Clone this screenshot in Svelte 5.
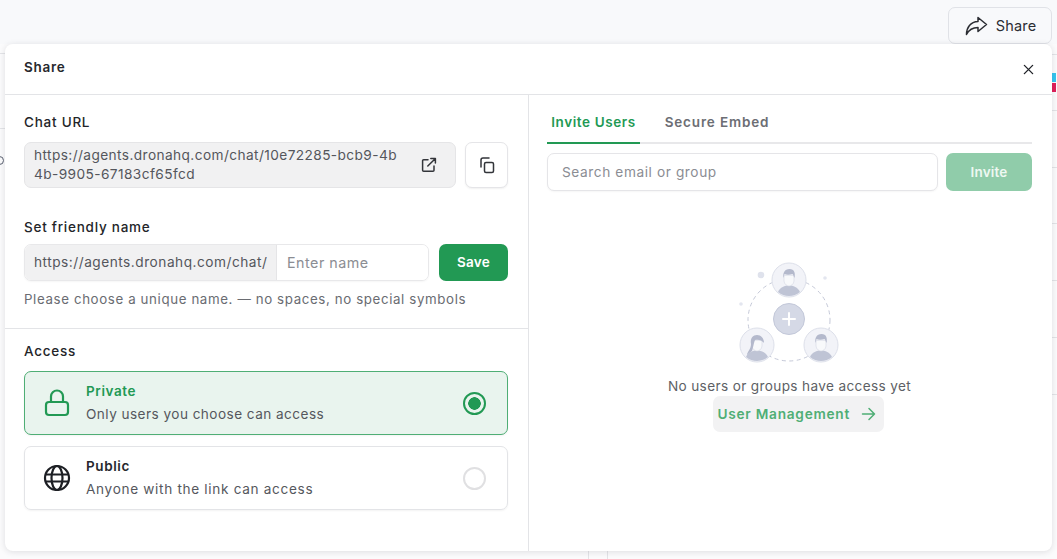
<script>
    const rowLines = [54, 110, 167, 223, 280, 337, 394];
    const peopleSpots = [
        { x: 50, y: 19 },
        { x: 18, y: 84 },
        { x: 82, y: 84 },
    ];

    let access = "private";
</script>

<div class="page">
    <header class="topbar">
        <button class="share-trigger">
            <svg width="24" height="24" viewBox="0 0 24 24" fill="none" stroke="#2b2d33" stroke-width="1.5" stroke-linejoin="round" stroke-linecap="round">
                <path d="M14 3.5 22.5 10.5 14 17.500V13.500C8.500 13.500 5 15.500 2.500 20.500 2.500 13.500 6.500 7.800 14 7.500Z" />
            </svg>
            Share
        </button>
    </header>

    <!-- table behind the dialog, only the edges show -->
    <div class="behind">
        <i class="line-left" style="top: 53px"></i>
        <i class="line-left" style="top: 128px"></i>
        <span class="peek"></span>
        {#each rowLines as top}
            <i class="line-right" style="top: {top}px"></i>
        {/each}
        <div class="slack"><b></b><b></b><b></b><b></b></div>
        <i class="line-v" style="left: 588px"></i>
        <i class="line-v" style="left: 607px"></i>
    </div>

    <div class="modal">
        <div class="modal-head">
            <h2>Share</h2>
            <button class="close" aria-label="Close">
                <svg width="11" height="11" viewBox="0 0 12 12" stroke="#22242a" stroke-width="1.500" stroke-linecap="round">
                    <path d="M1.500 1.500 10.500 10.500M10.500 1.500 1.500 10.500" />
                </svg>
            </button>
        </div>

        <div class="modal-body">
            <section class="left">
                <div class="link-part">
                    <div class="label label-url">Chat URL</div>
                    <div class="url-row">
                        <div class="url-box">
                            <span class="url-text">https://agents.dronahq.com/chat/10e72285-bcb9-4b4b-9905-67183cf65fcd</span>
                            <svg class="open" width="16" height="16" viewBox="0 0 16 16" fill="none" stroke="#33353a" stroke-width="1.500" stroke-linecap="round" stroke-linejoin="round">
                                <path d="M7 2.800H2.600a1 1 0 0 0-1 1V13.200a1 1 0 0 0 1 1H12a1 1 0 0 0 1-1V9" />
                                <path d="M6.800 9 14.200 1.700M9.800 1.500H14.400V6.100" />
                            </svg>
                        </div>
                        <button class="copy" aria-label="Copy">
                            <svg width="16" height="17" viewBox="0 0 16 17" fill="none" stroke="#33353a" stroke-width="1.500" stroke-linecap="round" stroke-linejoin="round">
                                <rect x="5.500" y="5.500" width="9" height="10" rx="1.500" />
                                <path d="M2 10V3a2 2 0 0 1 2-2h6" />
                            </svg>
                        </button>
                    </div>

                    <div class="label label-name">Set friendly name</div>
                    <div class="name-row">
                        <div class="name-field">
                            <span class="prefix">https://agents.dronahq.com/chat/</span>
                            <input placeholder="Enter name" />
                        </div>
                        <button class="save">Save</button>
                    </div>
                    <p class="hint">Please choose a unique name. — no spaces, no special symbols</p>
                </div>

                <div class="access-part">
                    <div class="label">Access</div>
                    <div class="options">
                        <div class="option" class:selected={access === "private"}>
                            <svg class="opt-icon" width="28" height="28" viewBox="0 0 28 28" fill="none" stroke="#229954" stroke-width="2.200" stroke-linejoin="round">
                                <rect x="3" y="13" width="22" height="13" rx="3" />
                                <path d="M8 13V7.500a6 6 0 0 1 12 0V13" />
                            </svg>
                            <div class="opt-text">
                                <strong>Private</strong>
                                <span class="tight">Only users you choose can access</span>
                            </div>
                            <span class="radio"></span>
                        </div>
                        <div class="option" class:selected={access === "public"}>
                            <svg class="opt-icon" width="28" height="28" viewBox="0 0 28 28" fill="none" stroke="#1d1f24" stroke-width="2.200">
                                <circle cx="14" cy="14" r="12" />
                                <ellipse cx="14" cy="14" rx="5.500" ry="12" />
                                <path d="M2.500 10.500H25.500M2.500 17.500H25.500" />
                            </svg>
                            <div class="opt-text">
                                <strong>Public</strong>
                                <span>Anyone with the link can access</span>
                            </div>
                            <span class="radio"></span>
                        </div>
                    </div>
                </div>
            </section>

            <section class="right">
                <nav class="tabs">
                    <button class="tab active">Invite Users</button>
                    <button class="tab">Secure Embed</button>
                </nav>
                <div class="invite-row">
                    <input class="search" placeholder="Search email or group" />
                    <button class="invite">Invite</button>
                </div>

                <div class="empty">
                    <svg class="people" width="100" height="100" viewBox="0 0 100 100">
                        <circle cx="50" cy="59" r="41" fill="none" stroke="#c5c9d8" stroke-width="1" stroke-dasharray="4 3.500" />
                        <circle cx="22" cy="14" r="3.300" fill="#dfe2ec" />
                        <circle cx="86" cy="17" r="1.800" fill="#e3e6ef" />
                        <circle cx="2" cy="43" r="1.800" fill="#e3e6ef" />
                        <circle cx="50" cy="58" r="15.500" fill="#d5d9e6" stroke="#c3c8d9" stroke-width="1" />
                        <path d="M50 52v12M44 58h12" stroke="#fff" stroke-width="2" stroke-linecap="round" />
                        {#each peopleSpots as spot, i}
                            <g transform="translate({spot.x - 17} {spot.y - 17})">
                                <circle cx="17" cy="17" r="17" fill="#f2f3f8" stroke="#dde0ea" stroke-width="1" />
                                <path d="M6 29c2-5 7-6 11-7 4 1 9 2 11 7a17 17 0 0 1-22 0Z" fill="#bfc4d5" />
                                <path d="M12 13c0-1 10-1 10 0v5c0 3-3 5-5 5s-5-2-5-5Z" fill="#f8f9fb" stroke="#d3d6e2" stroke-width=".6" />
                                <path d={i === 1
                                    ? "M11 16c-1-6 2-9 6-9s7 3 7 8c-2-3-6-4-9-3-1 2-2 8-3 11-3 2-5 4-5 4 0-3 4-6 4-11Z"
                                    : "M11.500 15c-1-5 1-9 6-9s6 4 5 9c-1-2-1-3-2-4-3 1-6 1-8 0Z"} fill="#b4b9cc" />
                            </g>
                        {/each}
                    </svg>
                    <p>No users or groups have access yet</p>
                    <button class="manage">
                        User Management
                        <svg width="15" height="14" viewBox="0 0 15 14" fill="none" stroke="#4fae75" stroke-width="1.500" stroke-linecap="round" stroke-linejoin="round">
                            <path d="M1.500 7H13.500M8 1.500 13.500 7 8 12.500" />
                        </svg>
                    </button>
                </div>
            </section>
        </div>
    </div>
</div>

<style>
    :global(body) {
        margin: 0;
        background: #fbfbfc;
    }

    .page {
        position: relative;
        width: 1057px;
        height: 559px;
        overflow: hidden;
        font-family: "Inter", "Open Sans", sans-serif;
        color: #26282d;
    }

    button,
    input {
        font-family: inherit;
    }

    .topbar {
        height: 44px;
        background: #f8f9fb;
        display: flex;
        justify-content: flex-end;
        align-items: flex-start;
        padding: 7px 5px 0 0;
        box-sizing: border-box;
    }

    .share-trigger {
        width: 104px;
        height: 37px;
        display: flex;
        align-items: center;
        justify-content: center;
        gap: 8px;
        background: #f8f9fb;
        border: 1px solid #e0e2e7;
        border-radius: 7px;
        font-size: 14.500px;
        letter-spacing: 0.2px;
        color: #2b2d33;
        padding: 0;
    }

    .behind i {
        position: absolute;
        background: #e3e4e7;
    }

    .line-left {
        left: 0;
        width: 6px;
        height: 1px;
    }

    .line-right {
        right: 0;
        width: 6px;
        height: 1px;
    }

    .line-v {
        top: 549px;
        width: 1px;
        height: 10px;
    }

    /* clipped glyph of the table behind */
    .peek {
        position: absolute;
        left: -5px;
        top: 156px;
        width: 7px;
        height: 7px;
        border: 1.500px solid #5a6070;
        border-radius: 50%;
    }

    .slack {
        position: absolute;
        left: 1051px;
        top: 73px;
        display: grid;
        grid-template-columns: 5px 6px;
        grid-template-rows: 9px 9px;
        gap: 1px;
    }

    .slack b:nth-child(1) {
        background: #36c5f0;
    }

    .slack b:nth-child(2) {
        background: #2eb67d;
    }

    .slack b:nth-child(3) {
        background: #e01e5a;
    }

    .slack b:nth-child(4) {
        background: #ecb22e;
    }

    /* dialog sits on top of the page */
    .modal {
        position: absolute;
        left: 5px;
        top: 44px;
        width: 1047px;
        height: 507px;
        background: #fff;
        border-radius: 8px;
        box-shadow: 0 1px 6px rgba(40, 45, 60, 0.14);
        display: flex;
        flex-direction: column;
    }

    .modal-head {
        height: 51px;
        flex: none;
        box-sizing: border-box;
        border-bottom: 1px solid #e3e4e7;
        display: flex;
        align-items: center;
        justify-content: space-between;
        padding: 0 18px 5px 19px;
    }

    h2 {
        margin: 0;
        font-size: 13.500px;
        font-weight: 600;
        letter-spacing: 0.7px;
    }

    .close {
        background: none;
        border: 0;
        padding: 0;
        display: flex;
        margin-top: 5px;
    }

    .modal-body {
        flex: 1;
        display: flex;
        min-height: 0;
    }

    .left {
        width: 524px;
        flex: none;
        box-sizing: border-box;
        border-right: 1px solid #e3e4e7;
        display: flex;
        flex-direction: column;
    }

    .link-part {
        height: 234px;
        flex: none;
        box-sizing: border-box;
        padding: 19px 19px 0;
        border-bottom: 1px solid #e3e4e7;
    }

    .label {
        font-size: 13.500px;
        font-weight: 500;
        line-height: 17px;
        letter-spacing: 0.75px;
        color: #232529;
    }

    .label-url {
        margin-bottom: 11px;
    }

    .label-name {
        margin: 31px 0 8px;
    }

    .url-row {
        display: flex;
        gap: 9px;
        height: 46px;
    }

    .url-box {
        width: 432px;
        box-sizing: border-box;
        background: #f1f1f2;
        border: 1px solid #e5e5e7;
        border-radius: 7px;
        display: flex;
        align-items: center;
        padding: 0 18px 0 9px;
        gap: 22px;
    }

    .url-text {
        flex: 1;
        font-size: 13.700px;
        line-height: 19px;
        color: #54565c;
        word-break: break-all;
        letter-spacing: 0.4px;
    }

    .open {
        flex: none;
    }

    .copy {
        width: 43px;
        height: 46px;
        background: #fff;
        border: 1px solid #e5e5e8;
        border-radius: 7px;
        box-shadow: 0 1px 2px rgba(0, 0, 0, 0.06);
        display: flex;
        align-items: center;
        justify-content: center;
        padding: 0;
    }

    .name-row {
        display: flex;
        gap: 10px;
        height: 37px;
    }

    .name-field {
        width: 405px;
        display: flex;
        border: 1px solid #e8e8ea;
        border-radius: 7px;
        box-sizing: border-box;
        overflow: hidden;
        box-shadow: 0 1px 2px rgba(0, 0, 0, 0.04);
    }

    .prefix {
        width: 252px;
        flex: none;
        box-sizing: border-box;
        background: #f1f1f2;
        border-right: 1px solid #e5e5e7;
        font-size: 13.700px;
        letter-spacing: 0.5px;
        color: #54565c;
        padding-left: 9px;
        line-height: 35px;
        white-space: nowrap;
    }

    .name-field input {
        flex: 1;
        min-width: 0;
        border: 0;
        outline: 0;
        padding: 0 10px;
        font-size: 14.300px;
        letter-spacing: 0.5px;
        color: #54565c;
    }

    input::placeholder {
        color: #8b8d93;
        opacity: 1;
    }

    .save {
        width: 69px;
        background: #229954;
        color: #fff;
        border: 0;
        border-radius: 7px;
        font-size: 13.500px;
        font-weight: 600;
        letter-spacing: 0.3px;
        padding: 0 0 2px;
    }

    .hint {
        margin: 9px 0 0;
        font-size: 13.300px;
        line-height: 18px;
        color: #6a6c72;
        letter-spacing: 0.62px;
    }

    .access-part {
        padding: 14px 20px 0 19px;
    }

    .options {
        margin-top: 11px;
        display: flex;
        flex-direction: column;
        gap: 11px;
    }

    .option {
        height: 64px;
        box-sizing: border-box;
        border: 1px solid #e3e4e7;
        border-radius: 7px;
        box-shadow: 0 1px 2px rgba(0, 0, 0, 0.05);
        display: flex;
        align-items: center;
        padding: 0 21px 0 18px;
    }

    .option.selected {
        background: #e9f4ee;
        border-color: #4fae75;
    }

    .opt-icon {
        flex: none;
    }

    .opt-text {
        flex: 1;
        margin-left: 15px;
        padding-bottom: 2px;
        display: flex;
        flex-direction: column;
        gap: 5px;
    }

    .opt-text strong {
        font-size: 13.500px;
        font-weight: 600;
        line-height: 18px;
        letter-spacing: 0.6px;
        color: #26282d;
    }

    .opt-text span {
        font-size: 13.600px;
        line-height: 18px;
        color: #55575d;
        letter-spacing: 0.68px;
    }

    .opt-text span.tight {
        letter-spacing: 0.45px;
    }

    .selected .opt-text strong {
        color: #229954;
    }

    .radio {
        width: 23px;
        height: 23px;
        box-sizing: border-box;
        border-radius: 50%;
        border: 2px solid #e0e0e2;
        background: #fff;
    }

    .selected .radio {
        border-color: #229954;
        background: radial-gradient(circle, #229954 0 6px, #e9f4ee 6.500px);
    }

    .right {
        flex: 1;
        padding: 15px 20px 0 18px;
        min-width: 0;
    }

    .tabs {
        display: flex;
        height: 34px;
        border-bottom: 2px solid #e8e8ea;
        box-sizing: border-box;
        gap: 0;
    }

    .tab {
        height: 34px;
        background: none;
        border: 0;
        border-bottom: 2px solid transparent;
        padding: 0 0 9px;
        font-size: 13.500px;
        font-weight: 600;
        color: #6c6e74;
        letter-spacing: 0.6px;
        width: 93px;
        box-sizing: border-box;
        white-space: nowrap;
    }

    .tab + .tab {
        width: 130px;
        margin-left: 12px;
        letter-spacing: 0.85px;
    }

    .tab.active {
        color: #229954;
        border-bottom-color: #229954;
    }

    .invite-row {
        display: flex;
        gap: 8px;
        margin-top: 9px;
        height: 38px;
    }

    .search {
        flex: 1;
        min-width: 0;
        box-sizing: border-box;
        border: 1px solid #e5e5e8;
        border-radius: 7px;
        box-shadow: 0 1px 2px rgba(0, 0, 0, 0.04);
        outline: 0;
        padding: 0 14px;
        font-size: 13.700px;
        letter-spacing: 0.58px;
    }

    .invite {
        width: 86px;
        background: #90ccaa;
        color: #eef8f2;
        border: 0;
        border-radius: 7px;
        font-size: 13.500px;
        font-weight: 600;
        letter-spacing: 0.2px;
        padding: 0;
    }

    .empty {
        margin-top: 70px;
        display: flex;
        flex-direction: column;
        align-items: center;
    }

    .people {
        display: block;
        overflow: visible;
        transform: translateX(-1px);
    }

    .empty p {
        margin: 16px 0 0;
        font-size: 13.600px;
        line-height: 18px;
        color: #5d5f65;
        letter-spacing: 0.36px;
    }

    .manage {
        margin: 1px 0 0 17px;
        width: 171px;
        height: 36px;
        background: #f2f2f3;
        border: 0;
        border-radius: 7px;
        color: #4fae75;
        font-size: 13.700px;
        font-weight: 600;
        letter-spacing: 0.73px;
        display: flex;
        align-items: center;
        justify-content: flex-start;
        gap: 11px;
        padding: 0 0 0 5px;
    }
</style>
